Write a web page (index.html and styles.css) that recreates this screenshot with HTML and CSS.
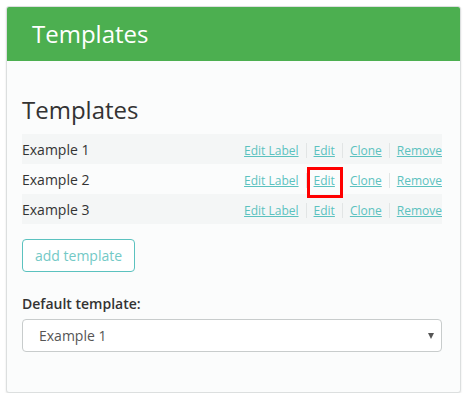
FILE: index.html
```html
<!DOCTYPE html>
<html>
<head>
<meta charset="utf-8">
<link rel="stylesheet" href="styles.css">
</head>
<body>
<div class="panel">
  <div class="panel-heading">Templates</div>
  <div class="panel-body">
    <h2 class="title">Templates</h2>
    <div class="table">
      <div class="row odd">
        <span class="name">Example 1</span>
        <span class="actions">
          <a class="link" href="#">Edit Label</a><span class="sep"></span><a class="link" href="#">Edit</a><span class="sep"></span><a class="link" href="#">Clone</a><span class="sep"></span><a class="link" href="#">Remove</a>
        </span>
      </div>
      <div class="row">
        <span class="name">Example 2</span>
        <span class="actions">
          <a class="link" href="#">Edit Label</a><span class="sep"></span><a class="link marked" href="#">Edit</a><span class="sep"></span><a class="link" href="#">Clone</a><span class="sep"></span><a class="link" href="#">Remove</a>
        </span>
      </div>
      <div class="row odd">
        <span class="name">Example 3</span>
        <span class="actions">
          <a class="link" href="#">Edit Label</a><span class="sep"></span><a class="link" href="#">Edit</a><span class="sep"></span><a class="link" href="#">Clone</a><span class="sep"></span><a class="link" href="#">Remove</a>
        </span>
      </div>
    </div>
    <button class="btn-add" type="button">add template</button>
    <label class="label" for="def">Default template:</label>
    <div class="select-wrap">
      <select id="def" class="select">
        <option>Example 1</option>
        <option>Example 2</option>
        <option>Example 3</option>
      </select>
    </div>
  </div>
</div>
</body>
</html>
```
FILE: styles.css
```css
html, body {
  margin: 0;
  padding: 0;
  background: #ffffff;
}
body {
  padding: 6px 0 0 6px;
  font-family: "Open Sans", "Liberation Sans", sans-serif;
  color: #333333;
}
.panel {
  width: 455px;
  box-sizing: border-box;
  border: 1px solid #dcdfdf;
  border-radius: 3px;
  background: #fbfcfc;
  box-shadow: 0 1px 2px rgba(0, 0, 0, 0.12);
  overflow: hidden;
}
.panel-heading {
  background: #4caf50;
  color: #ffffff;
  height: 55px;
  box-sizing: border-box;
  padding-left: 26px;
  font-size: 24px;
  line-height: 55px;
  margin: -1px -1px 0 -1px;
}
.panel-body {
  padding: 36px 18px 40px 15px;
  display: flex;
  flex-direction: column;
  align-items: flex-start;
}
.title {
  margin: 0 0 11px 0;
  font-size: 24px;
  font-weight: 400;
  line-height: 26px;
  color: #333333;
}
.table {
  align-self: stretch;
  display: flex;
  flex-direction: column;
}
.row {
  height: 30px;
  display: flex;
  align-items: center;
  justify-content: space-between;
  font-size: 14px;
}
.row.odd {
  background: #f4f6f6;
}
.name {
  color: #333333;
}
.actions {
  display: flex;
  align-items: center;
  font-size: 12px;
  line-height: 17px;
  margin-top: 2px;
}
.link {
  color: #5bc2bf;
  text-decoration: underline;
  position: relative;
}
.sep {
  display: inline-block;
  width: 1px;
  height: 15px;
  background: #e2e5e5;
  margin: 0 7px;
}
.marked::after {
  content: "";
  position: absolute;
  left: -7px;
  right: -8px;
  top: -5px;
  height: 31px;
  box-sizing: border-box;
  border: 3px solid #ff0000;
}
.btn-add {
  margin-top: 15px;
  height: 33px;
  padding: 0 12px;
  border: 1px solid #5bc2bf;
  border-radius: 4px;
  background: #ffffff;
  color: #73c9c6;
  font-family: "Open Sans", "Liberation Sans", sans-serif;
  font-size: 14px;
}
.label {
  margin-top: 22px;
  margin-bottom: 5px;
  font-size: 14px;
  line-height: 20px;
  font-weight: 600;
  color: #333333;
}
.select-wrap {
  align-self: stretch;
  position: relative;
}
.select-wrap::after {
  content: "";
  position: absolute;
  right: 8px;
  top: 14px;
  border-left: 3.5px solid transparent;
  border-right: 3.5px solid transparent;
  border-top: 6px solid #555555;
  pointer-events: none;
}
.select {
  -webkit-appearance: none;
  appearance: none;
  width: 100%;
  height: 33px;
  box-sizing: border-box;
  border: 1px solid #c8cccc;
  border-radius: 4px;
  background: #ffffff;
  padding: 0 16px;
  font-family: "Open Sans", "Liberation Sans", sans-serif;
  font-size: 14px;
  color: #555555;
}
```
